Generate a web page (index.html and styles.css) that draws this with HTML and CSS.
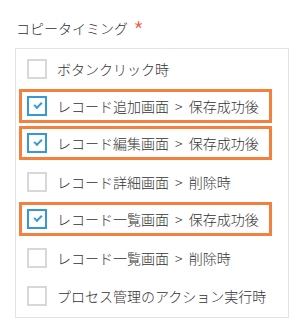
FILE: index.html
```html
<!DOCTYPE html>
<html lang="ja">
<head>
    <meta charset="utf-8">
    <meta name="viewport" content="width=device-width, initial-scale=1">
    <link rel="stylesheet" href="styles.css">
    <title>コピータイミング</title>
</head>
<body>
<div class="field">
    <div class="fieldLabel">コピータイミング <span class="required">*</span></div>
    <div class="optionBox">
        <div class="option"><span class="check"></span><span>ボタンクリック時</span></div>
        <div class="option marked"><span class="check on"></span><span>レコード追加画面 &gt; 保存成功後</span></div>
        <div class="option marked"><span class="check on"></span><span>レコード編集画面 &gt; 保存成功後</span></div>
        <div class="option"><span class="check"></span><span>レコード詳細画面 &gt; 削除時</span></div>
        <div class="option marked"><span class="check on"></span><span>レコード一覧画面 &gt; 保存成功後</span></div>
        <div class="option"><span class="check"></span><span>レコード一覧画面 &gt; 削除時</span></div>
        <div class="option"><span class="check"></span><span>プロセス管理のアクション実行時</span></div>
    </div>
</div>
</body>
</html>
```

FILE: styles.css
```css
body {
    margin: 0;
    background: #fff;
    font-family: "Noto Sans CJK JP", "Noto Sans", sans-serif;
    font-size: 14px;
    font-weight: 300;
    color: #333;
}

.field {
    padding: 16px 17px 0 15px;
}

.fieldLabel {
    height: 24px;
    line-height: 24px;
    padding-left: 1px;
    margin-bottom: 8px;
}
.required {
    color: #f0624e;
    font-size: 25px;
    line-height: 10px;
    vertical-align: -7px;
    margin-left: 2px;
}

.optionBox {
    border: 1px solid #e3e3e3;
    padding: 1px 3px 2px 3px;
}

.option {
    display: flex;
    align-items: center;
    width: 253px;
    height: 38px;
    box-sizing: border-box;
    border: 3px solid transparent;
    border-top-width: 4px;
    border-bottom-width: 4px;
    padding-left: 5px;
    word-spacing: 3px;
}
.option.marked {
    border: 3px solid #f5803e;
    height: 34px;
    margin: 1px 0 3px 0;
}

.check {
    position: relative;
    width: 20px;
    height: 20px;
    box-sizing: border-box;
    border: 2px solid #d8d8d8;
    background: #fff;
    margin-right: 10px;
    flex-shrink: 0;
}
.check.on {
    border-color: #3498db;
}
.check.on:after {
    content: "";
    position: absolute;
    left: 5px;
    top: 4px;
    width: 6px;
    height: 3px;
    border-left: 2px solid #3498db;
    border-bottom: 2px solid #3498db;
    transform: rotate(-45deg);
}
```
